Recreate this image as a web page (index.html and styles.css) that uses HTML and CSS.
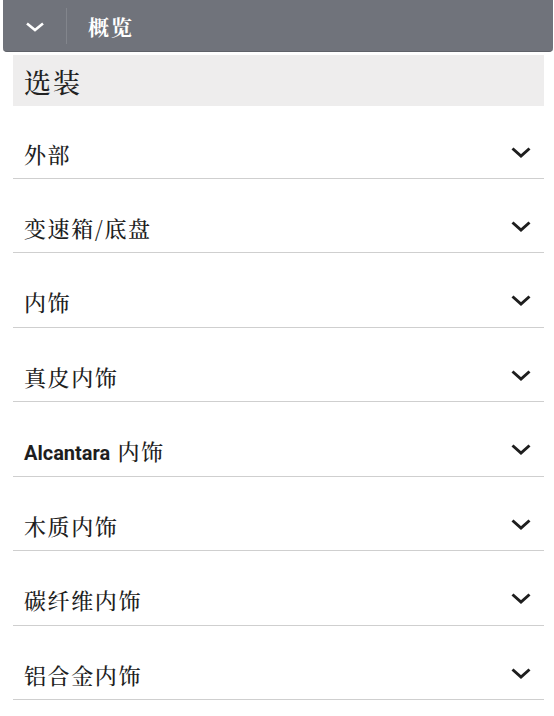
FILE: index.html
```html
<!DOCTYPE html>
<html>

<head lang="zh">
    <meta charset="UTF-8">
    <title>选装</title>
    <link rel="stylesheet" href="styles.css">
</head>

<body>
    <div class="topbar">
        <div class="toggle">
            <svg width="20" height="10" viewBox="0 0 20 10"><path d="M2 1.5 L10 8 L18 1.5" fill="none" stroke="#fff" stroke-width="2.6"/></svg>
        </div>
        <div class="topbar-title">概览</div>
    </div>
    <div class="container">
        <h2 class="section-title">选装</h2>
        <ul class="options">
            <li class="option"><span>外部</span><svg class="arrow" viewBox="0 0 20 11"><path d="M1.5 1.5 L10 9 L18.5 1.5" /></svg></li>
            <li class="option"><span>变速箱/底盘</span><svg class="arrow" viewBox="0 0 20 11"><path d="M1.5 1.5 L10 9 L18.5 1.5" /></svg></li>
            <li class="option"><span>内饰</span><svg class="arrow" viewBox="0 0 20 11"><path d="M1.5 1.5 L10 9 L18.5 1.5" /></svg></li>
            <li class="option"><span>真皮内饰</span><svg class="arrow" viewBox="0 0 20 11"><path d="M1.5 1.5 L10 9 L18.5 1.5" /></svg></li>
            <li class="option"><span><b class="latin">Alcantara</b> 内饰</span><svg class="arrow" viewBox="0 0 20 11"><path d="M1.5 1.5 L10 9 L18.5 1.5" /></svg></li>
            <li class="option"><span>木质内饰</span><svg class="arrow" viewBox="0 0 20 11"><path d="M1.5 1.5 L10 9 L18.5 1.5" /></svg></li>
            <li class="option"><span>碳纤维内饰</span><svg class="arrow" viewBox="0 0 20 11"><path d="M1.5 1.5 L10 9 L18.5 1.5" /></svg></li>
            <li class="option"><span>铝合金内饰</span><svg class="arrow" viewBox="0 0 20 11"><path d="M1.5 1.5 L10 9 L18.5 1.5" /></svg></li>
        </ul>
    </div>
</body>

</html>
```
FILE: styles.css
```css
* {
    margin: 0;
    padding: 0;
}

body {
    background: #fff;
    font-family: "Noto Serif CJK SC", "Noto Sans CJK SC", serif;
    color: #1e1e1e;
}

.topbar {
    display: flex;
    align-items: center;
    height: 51px;
    margin: 0 1px 0 3px;
    background-color: #70737b;
    border-radius: 0 0 4px 4px;
    border-bottom: 1px solid #5f6269;
}

.toggle {
    width: 63px;
    height: 36px;
    display: flex;
    align-items: center;
    justify-content: center;
    border-right: 1px solid #82858c;
}

.toggle svg {
    margin-top: 2px;
}

.topbar-title {
    margin-left: 21px;
    font-size: 21px;
    font-weight: bold;
    letter-spacing: 2px;
    color: #fff;
}

.container {
    padding: 0 10px 0 13px;
}

.section-title {
    margin-top: 3px;
    height: 51px;
    line-height: 53px;
    padding-left: 11px;
    background-color: #eeeded;
    font-size: 27px;
    font-weight: 500;
    letter-spacing: 2px;
    color: #222;
}

.options {
    list-style: none;
}

.option {
    display: flex;
    align-items: center;
    justify-content: space-between;
    box-sizing: border-box;
    height: 74.5px;
    padding: 24px 13px 0 11px;
    border-bottom: 1px solid #cfcfcf;
    font-size: 22px;
    font-weight: 500;
    letter-spacing: 1.6px;
}

.option:first-child {
    height: 72.5px;
}

.latin {
    font-family: Roboto, "Liberation Sans", sans-serif;
    font-size: 20px;
    font-weight: bold;
    letter-spacing: 0;
}

.arrow {
    width: 20px;
    height: 11px;
    margin-top: -2px;
    fill: none;
    stroke: #1e1e1e;
    stroke-width: 3;
}
```
